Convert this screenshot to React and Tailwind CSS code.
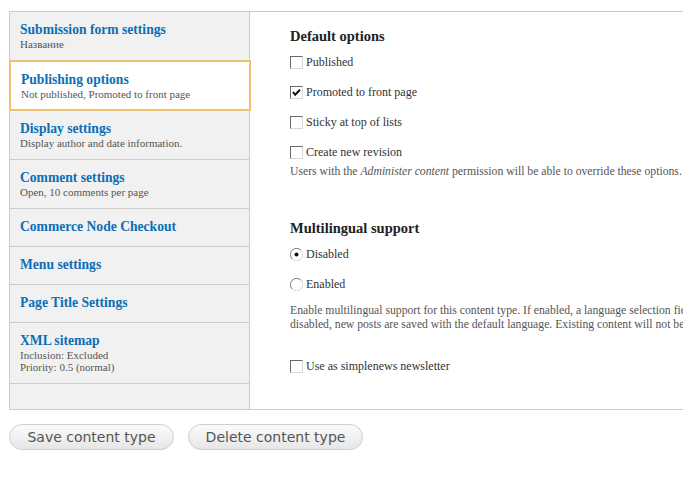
import React from 'react';

const tabs = [
    { title: 'Submission form settings', sub: ['Название'] },
    { title: 'Publishing options', sub: ['Not published, Promoted to front page'], active: true },
    { title: 'Display settings', sub: ['Display author and date information.'] },
    { title: 'Comment settings', sub: ['Open, 10 comments per page'] },
    { title: 'Commerce Node Checkout', sub: [] },
    { title: 'Menu settings', sub: [] },
    { title: 'Page Title Settings', sub: [] },
    { title: 'XML sitemap', sub: ['Inclusion: Excluded', 'Priority: 0.5 (normal)'] },
];

function Checkbox({ checked }) {
    return (
        <span className="relative inline-block w-[13px] h-[13px] shrink-0 bg-white border border-t-[#6b6b6b] border-l-[#6b6b6b] border-b-[#d8d8d8] border-r-[#d8d8d8]">
            {checked && (
                <svg viewBox="0 0 11 11" className="absolute inset-0 w-[11px] h-[11px]">
                    <path d="M2 5 L4.2 7.8 L9 2.8" stroke="#111" strokeWidth="2" fill="none" />
                </svg>
            )}
        </span>
    );
}

function Radio({ checked }) {
    return (
        <svg viewBox="0 0 13 13" className="w-[13px] h-[13px] shrink-0">
            <circle cx="6.5" cy="6.5" r="5.8" fill="#fff" />
            <path d="M11 2.2 A5.8 5.8 0 0 0 2.2 11" stroke="#7a7a7a" strokeWidth="1" fill="none" />
            <path d="M2.2 11 A5.8 5.8 0 0 0 11 2.2" stroke="#d4d4d4" strokeWidth="1" fill="none" />
            {checked && <circle cx="6.5" cy="6.5" r="2" fill="#111" />}
        </svg>
    );
}

function Option({ children }) {
    return (
        <div className="flex items-center gap-[3px] h-[20px] text-[12px] text-[#333] whitespace-nowrap">
            {children}
        </div>
    );
}

export default function App() {
    return (
        <div className="w-[683px] h-[491px] overflow-hidden bg-white" style={{ fontFamily: '"Liberation Serif", "DejaVu Serif", serif' }}>
            <div className="pt-[11px] pl-[9px]">
                <div className="flex border-t border-b border-[#cccccc] w-[700px]">
                    <div className="w-[241px] shrink-0 border-l border-r border-[#cccccc] bg-[#f1f1f1] flex flex-col">
                        {tabs.map((tab, i) => (
                            <div
                                key={i}
                                className={
                                    tab.active
                                        ? 'relative z-10 -ml-px -mr-[2px] -mt-px bg-white border-2 border-[#efc36e] pl-[10px] pt-[10px] pb-[9px]'
                                        : tab.sub.length
                                            ? 'border-b border-[#cccccc] pl-[10px] pt-[10px] pb-[10px]'
                                            : 'border-b border-[#cccccc] pl-[10px] pt-[10px] pb-[11px]'
                                }
                            >
                                <div className="text-[13.6px] leading-[16px] font-bold text-[#0b6fb6] whitespace-nowrap">{tab.title}</div>
                                {tab.sub.map((s, j) => (
                                    <div key={j} className="text-[11px] leading-[12px] text-[#555] whitespace-nowrap">{s}</div>
                                ))}
                            </div>
                        ))}
                        <div className="flex-1"></div>
                    </div>
                    <div className="flex-1 min-w-0 overflow-hidden pl-[40px] pt-[16px] pb-[33px]">
                        <h2 className="text-[14.5px] leading-[16px] font-bold text-[#222]">Default options</h2>
                        <div className="mt-[8px] flex flex-col gap-[10px]">
                            <Option><Checkbox /> Published</Option>
                            <Option><Checkbox checked /> Promoted to front page</Option>
                            <Option><Checkbox /> Sticky at top of lists</Option>
                            <Option><Checkbox /> Create new revision</Option>
                        </div>
                        <p className="mt-[3px] text-[11.7px] leading-[14px] text-[#555] whitespace-nowrap">
                            Users with the <em>Administer content</em> permission will be able to override these options.
                        </p>
                        <h2 className="mt-[41px] text-[14.5px] leading-[16px] font-bold text-[#222]">Multilingual support</h2>
                        <div className="mt-[8px] flex flex-col gap-[10px]">
                            <Option><Radio checked /> Disabled</Option>
                            <Option><Radio /> Enabled</Option>
                        </div>
                        <p className="mt-[10px] text-[11.7px] leading-[14px] text-[#555] whitespace-nowrap">
                            Enable multilingual support for this content type. If enabled, a language selection field will be added to the editing form, allowing you to select from one of the <br />
                            disabled, new posts are saved with the default language. Existing content will not be affected by changing this option.
                        </p>
                        <div className="mt-[24px]">
                            <Option><Checkbox /> Use as simplenews newsletter</Option>
                        </div>
                    </div>
                </div>
                <div className="mt-[14px] flex gap-[14px]" style={{ fontFamily: '"DejaVu Sans", Verdana, sans-serif' }}>
                    <button className="h-[26px] w-[165px] rounded-full border border-[#cfcfcf] bg-gradient-to-b from-[#fbfbfb] to-[#e6e6e6] text-[14px] text-[#555]">
                        Save content type
                    </button>
                    <button className="h-[26px] w-[175px] rounded-full border border-[#cfcfcf] bg-gradient-to-b from-[#fbfbfb] to-[#e6e6e6] text-[14px] text-[#555]">
                        Delete content type
                    </button>
                </div>
            </div>
        </div>
    );
}
